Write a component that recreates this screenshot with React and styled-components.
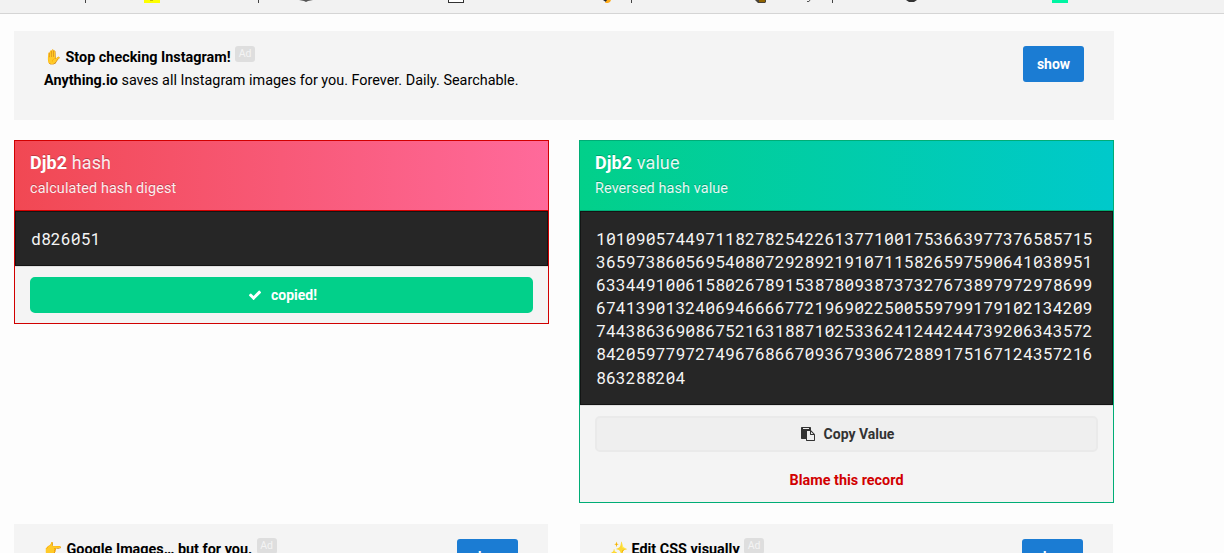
import React from "react";
import styled, { createGlobalStyle } from "styled-components";

const GlobalStyle = createGlobalStyle`
  * { box-sizing: border-box; }
  html, body { margin: 0; height: 553px; overflow: hidden; }
  body {
    background: #fdfdfd;
    color: #000;
    font: 14.4px/23px Roboto, "Liberation Sans", sans-serif;
  }
`;

const Page = styled.div`
  height: 553px;
  overflow: hidden;
`;

const Nav = styled.header`
  height: 14px;
  background: #f2f2f2;
  border-bottom: 1px solid #d5d5d5;
  svg { display: block; }
`;

const Content = styled.main`
  width: 1100px;
  margin: 17px 0 0 14px;
  display: flex;
  flex-direction: column;
`;

const Ad = styled.aside`
  display: flex;
  justify-content: space-between;
  align-items: flex-start;
  height: 89px;
  padding: 15px 30px;
  background: #f4f4f4;
`;

const AdText = styled.div`
  margin-top: ${(p) => (p.$raised ? "-1px" : "0")};
  white-space: nowrap;
`;

const AdTitle = styled.div`
  display: flex;
  font-weight: 700;
`;

const Emoji = styled.span`
  font-weight: 400;
  width: ${(p) => (p.$wide ? "18px" : "17px")};
  margin-right: 4.5px;
`;

const Badge = styled.span`
  width: 20px;
  height: 16px;
  margin-left: 4.5px;
  border-radius: 3px;
  background: #dedede;
  color: #f4f4f4;
  font-size: 10.5px;
  font-weight: 400;
  line-height: 15px;
  text-align: center;
`;

const ShowButton = styled.button`
  width: 61px;
  height: 36px;
  padding: 1px 0 0;
  border: 0;
  border-radius: 3px;
  background: #1b7cd3;
  color: #fff;
  font: 700 14px/35px Roboto, sans-serif;
`;

const Columns = styled.div`
  display: grid;
  grid-template-columns: 535px 535px;
  column-gap: 30px;
  align-items: start;
  margin-top: 20px;
`;

const AdColumns = styled(Columns)`
  grid-template-columns: 534px 533px;
  column-gap: 32px;
  margin-top: 21px;
`;

const Card = styled.section`
  border: 1px solid ${(p) => p.$line};
  background: #f4f4f4;
`;

const CardHeader = styled.div`
  height: 70px;
  padding: 10px 15px 0;
  border-bottom: 1px solid ${(p) => p.$line};
  background: linear-gradient(to right, ${(p) => p.$from}, ${(p) => p.$to});
  color: rgba(255, 255, 255, 0.92);
  text-shadow: 0 -1px 0 rgba(0, 0, 0, 0.22);
`;

const CardTitle = styled.h2`
  margin: 0;
  font-size: 18px;
  font-weight: 400;
  line-height: 24px;
  letter-spacing: 0.1px;
  b { color: #fff; }
`;

const CardSubtitle = styled.div`
  font-size: 14.4px;
  line-height: 28px;
  letter-spacing: 0.11px;
`;

const Code = styled.div`
  padding: 15px;
  border: 1px solid #141414;
  background: #262626;
  color: #f4f4f4;
  font-family: "Roboto Mono", Roboto, monospace;
  font-size: 16.56px;
  line-height: 23.09px;
  white-space: pre;
`;

const CardFooter = styled.div`
  padding: 10px 15px;
  border-top: 1px solid #e0e0e0;
`;

const WideButton = styled.button`
  display: flex;
  align-items: center;
  justify-content: center;
  gap: 9px;
  width: 100%;
  height: 36px;
  padding: ${(p) => (p.$done ? "0 0 0 2px" : "1px 0 0 2px")};
  border: 2px solid ${(p) => (p.$done ? "#02d08a" : "#eaeaea")};
  border-radius: 5px;
  background: ${(p) => (p.$done ? "#02d08a" : "#efefef")};
  color: ${(p) => (p.$done ? "#fff" : "#333")};
  font: 700 14px/20px Roboto, sans-serif;
  svg { display: block; margin-top: -1px; }
`;

const Blame = styled.a`
  display: block;
  margin: 17px 0 0;
  color: #d10000;
  font-weight: 700;
  font-size: 14.4px;
  text-align: center;
`;

const CheckIcon = () => (
  <svg width="14" height="14" viewBox="0 0 1792 1792" fill="currentColor">
    <path d="M1671 566q0 40-28 68l-724 724-136 136q-28 28-68 28t-68-28l-136-136-362-362q-28-28-28-68t28-68l136-136q28-28 68-28t68 28l294 295 656-657q28-28 68-28t68 28l136 136q28 28 28 68z" />
  </svg>
);

const PasteIcon = () => (
  <svg width="14" height="14" viewBox="0 0 1792 1792" fill="currentColor">
    <path d="M768 1664h896v-640h-416q-40 0-68-28t-28-68v-416h-384v1152zm256-1440v-64q0-13-9.5-22.5t-22.5-9.5h-704q-13 0-22.5 9.5t-9.5 22.5v64q0 13 9.5 22.5t22.5 9.5h704q13 0 22.5-9.5t9.5-22.5zm256 672h299l-299-299v299zm512 128v672q0 40-28 68t-68 28h-960q-40 0-68-28t-28-68v-160h-544q-40 0-68-28t-28-68v-1344q0-40 28-68t68-28h1088q40 0 68 28t28 68v328q21 13 36 28l408 408q28 28 48 76t20 88z" />
  </svg>
);

const NavIcons = () => (
  <svg width="1224" height="13" viewBox="0 0 1224 13">
    <path d="M85 0h1v3h-1zM258 0h1v3h-1zM631 0h1v3h-1zM832 0h1v3h-1z" fill="#444" />
    <path d="M144 0h16v3h-16z" fill="#fdff00" />
    <path d="M150 0h3v1h-3z" fill="#c9bd00" />
    <path d="M299 0h14l-5 1-2 1-2-1z" fill="#555" />
    <path d="M448 0h16v3h-16z" fill="#333" />
    <path d="M449 0h14v2h-14z" fill="#fff" />
    <path d="M603 0h4v2h-1z" fill="#222" />
    <path d="M605 3l2-3h4l-1 2-2 1h-2z" fill="#ffab19" />
    <path d="M755 0h11v2l-1 1h-7l-2-2z" fill="#494238" />
    <path d="M759 0h6v2h-6z" fill="#906400" />
    <path d="M807 1.5h2l1-1.5" fill="none" stroke="#555" />
    <path d="M906 0h11l-3 2h-5z" fill="#333" />
    <path d="M1052 0h16v3h-16z" fill="#00f5a3" />
  </svg>
);

const VALUE = [
  "10109057449711827825422613771001753663977376585715",
  "36597386056954080729289219107115826597590641038951",
  "63344910061580267891538780938737327673897972978699",
  "67413901324069466667721969022500559799179102134209",
  "74438636908675216318871025336241244244739206343572",
  "84205977972749676866709367930672889175167124357216",
  "863288204",
].join("\n");

const AdBox = ({ emoji, title, raised, wide, children }) => (
  <Ad>
    <AdText $raised={raised}>
      <AdTitle>
        <Emoji $wide={wide}>{emoji}</Emoji>
        {title}
        <Badge>Ad</Badge>
      </AdTitle>
      {children}
    </AdText>
    <ShowButton>show</ShowButton>
  </Ad>
);

export default function App() {
  return (
    <Page>
      <GlobalStyle />
      <Nav>
        <NavIcons />
      </Nav>
      <Content>
        <AdBox emoji="✋" title="Stop checking Instagram!">
          <b>Anything.io</b> saves all Instagram images for you. Forever. Daily. Searchable.
        </AdBox>
        <Columns>
          <Card $line="#d10000">
            <CardHeader $line="#d10000" $from="#f14853" $to="#ff6a9b">
              <CardTitle><b>Djb2</b> hash</CardTitle>
              <CardSubtitle>calculated hash digest</CardSubtitle>
            </CardHeader>
            <Code>d826051</Code>
            <CardFooter>
              <WideButton $done><CheckIcon />copied!</WideButton>
            </CardFooter>
          </Card>
          <Card $line="#00ad76">
            <CardHeader $line="#00ad76" $from="#02d08a" $to="#00c9cb">
              <CardTitle><b>Djb2</b> value</CardTitle>
              <CardSubtitle>Reversed hash value</CardSubtitle>
            </CardHeader>
            <Code>{VALUE}</Code>
            <CardFooter>
              <WideButton><PasteIcon />Copy Value</WideButton>
              <Blame>Blame this record</Blame>
            </CardFooter>
          </Card>
        </Columns>
        <AdColumns>
          <AdBox raised wide emoji="👉" title="Google Images… but for you." />
          <AdBox raised emoji="✨" title="Edit CSS visually" />
        </AdColumns>
      </Content>
    </Page>
  );
}
